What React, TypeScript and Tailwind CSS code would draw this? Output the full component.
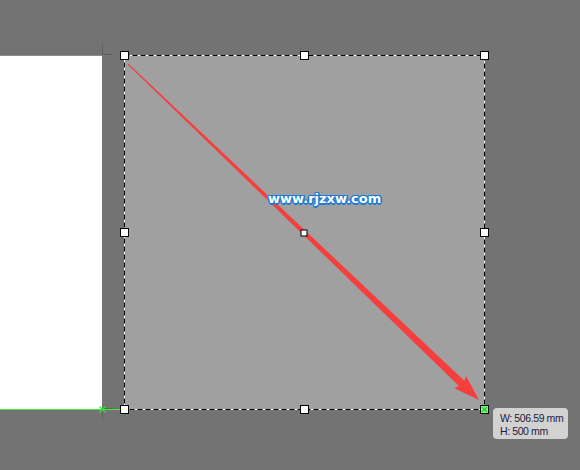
import React from "react";

const handles: [number, number][] = [
  [124, 55], [304, 55], [484, 55],
  [124, 232], [484, 232],
  [124, 409], [304, 409],
];

function arrowPoints() {
  const sx = 128, sy = 64, tx = 479, ty = 400;
  const dx = tx - sx, dy = ty - sy;
  const len = Math.hypot(dx, dy);
  const ux = dx / len, uy = dy / len;
  const px = -uy, py = ux;
  const headLen = 24;
  const bx = tx - ux * headLen, by = ty - uy * headLen;
  const w0 = 0.5, w1 = 3.8, hw = 8.5;
  const pts = [
    [sx + px * w0, sy + py * w0],
    [bx + px * w1, by + py * w1],
    [bx + px * hw - ux * 2, by + py * hw - uy * 2],
    [tx, ty],
    [bx - px * hw - ux * 2, by - py * hw - uy * 2],
    [bx - px * w1, by - py * w1],
    [sx - px * w0, sy - py * w0],
  ];
  return pts.map((p) => p.map((v) => v.toFixed(1)).join(",")).join(" ");
}

export default function App() {
  return (
    <div className="relative w-[580px] h-[470px] overflow-hidden bg-[#737373] font-['Liberation_Sans',sans-serif]">
      {/* white page */}
      <div className="absolute left-0 top-[55px] w-[102px] h-[354px] bg-white border-t border-[#8c8c8c]" />
      {/* selection fill */}
      <div className="absolute left-[124px] top-[55px] w-[360px] h-[354px] bg-[#a0a0a0]" />

      <svg className="absolute left-0 top-0" width="580" height="470">
        {/* crosshair marks */}
        <line x1="102.5" y1="44" x2="102.5" y2="55" stroke="#5e5e5e" strokeWidth="1" />
        <line x1="104" y1="54.5" x2="113" y2="54.5" stroke="#5e5e5e" strokeWidth="1" />
        <line x1="102.5" y1="409" x2="102.5" y2="419" stroke="#5e5e5e" strokeWidth="1" />
        <line x1="102" y1="408.5" x2="113" y2="408.5" stroke="#5e5e5e" strokeWidth="1" />
        {/* green baseline */}
        <line x1="0" y1="409.5" x2="484" y2="409.5" stroke="#3df23d" strokeWidth="1" />
        {/* arrow */}
        <polygon points={arrowPoints()} fill="#f53f3f" />
        {/* dashed selection border */}
        <rect x="124.5" y="55.5" width="360" height="354" fill="none" stroke="#ffffff" strokeWidth="1" />
        <rect x="124.5" y="55.5" width="360" height="354" fill="none" stroke="#000000" strokeWidth="1" strokeDasharray="5 3" />
        {/* handles */}
        {handles.map(([x, y], i) => (
          <rect key={i} x={x - 3.5} y={y - 3.5} width="8" height="8" fill="#ffffff" stroke="#000000" strokeWidth="1" />
        ))}
        <rect x={304 - 3} y={233 - 3} width="6" height="6" fill="#ffffff" stroke="#000000" strokeWidth="1" />
        {/* bottom-right active handle */}
        <rect x={484 - 3.5} y={409 - 3.5} width="8" height="8" fill="#7dff7d" stroke="#000000" strokeWidth="1" />
        <line x1="482" y1="407" x2="487" y2="412" stroke="#22cc22" strokeWidth="1.2" />
        <line x1="487" y1="407" x2="482" y2="412" stroke="#22cc22" strokeWidth="1.2" />
        {/* green x at origin */}
        <line x1="99.5" y1="406.5" x2="105.5" y2="412.5" stroke="#2ee62e" strokeWidth="1.2" />
        <line x1="105.5" y1="406.5" x2="99.5" y2="412.5" stroke="#2ee62e" strokeWidth="1.2" />
      </svg>

      {/* watermark */}
      <div className="absolute left-[268px] top-[190px] whitespace-nowrap text-[13px] leading-[18px] font-bold text-white font-['DejaVu_Sans',sans-serif] [text-shadow:1.5px_0_#1b7bd6,-1.5px_0_#1b7bd6,0_1.5px_#1b7bd6,0_-1.5px_#1b7bd6,1px_1px_#1b7bd6,-1px_-1px_#1b7bd6,1px_-1px_#1b7bd6,-1px_1px_#1b7bd6]">
        www.rjzxw.com
      </div>

      {/* size tooltip */}
      <div className="absolute left-[493px] top-[408px] w-[75px] h-[31px] rounded-[4px] bg-[#d2d2d2] pl-[7px] pt-[4px] whitespace-nowrap text-[10.5px] tracking-[-0.4px] leading-[12.5px] text-[#1c1c38]">
        <div>W: 506.59 mm</div>
        <div>H: 500 mm</div>
      </div>
    </div>
  );
}
